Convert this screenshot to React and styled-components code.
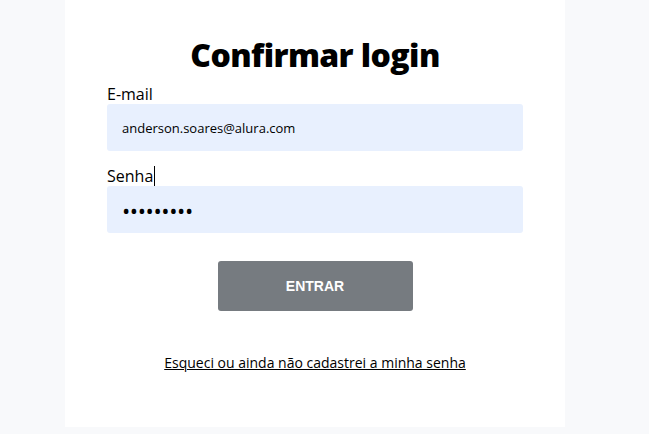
import React from "react";
import styled, { createGlobalStyle } from "styled-components";

const Global = createGlobalStyle`
  html, body { margin: 0; padding: 0; background: #f8f9fb; }
  body { font-family: "Open Sans", "Liberation Sans", sans-serif; color: #000; }
`;

const Page = styled.div`
  display: flex;
  min-height: 434px;
  padding-left: 65px;
  box-sizing: border-box;
`;

const Card = styled.main`
  width: 500px;
  height: 427px;
  background: #fff;
  box-sizing: border-box;
  padding: 33px 42px 0;
  display: flex;
  flex-direction: column;
`;

const Title = styled.h1`
  margin: 0 0 7px;
  font-size: 32px;
  font-weight: 800;
  text-align: center;
  line-height: 44px;
  letter-spacing: -0.6px;
`;

const Form = styled.form`
  display: flex;
  flex-direction: column;
`;

const Label = styled.label`
  font-size: 16px;
  line-height: 20px;
  display: flex;
  align-items: center;
  margin-top: ${(p) => p.$gap || 0}px;
`;

const Caret = styled.span`
  display: inline-block;
  width: 1px;
  height: 20px;
  background: #000;
  margin-left: 1px;
`;

const Input = styled.div`
  height: 47px;
  background: #e8f0fe;
  border-radius: 3px;
  padding: 0 15px;
  display: flex;
  align-items: center;
  font-size: 13px;
  box-sizing: border-box;
`;

const Dots = styled.span`
  font-size: 22px;
  letter-spacing: -0.4px;
  line-height: 1;
`;

const Button = styled.button`
  align-self: center;
  margin-top: 28px;
  width: 195px;
  height: 50px;
  border: none;
  border-radius: 3px;
  background: #767b80;
  color: #fff;
  font-family: "Liberation Sans", Arial, sans-serif;
  font-weight: 700;
  font-size: 14px;
  cursor: pointer;
`;

const Link = styled.a`
  align-self: center;
  margin-top: 42px;
  font-size: 14px;
  color: #000;
  text-decoration: underline;
`;

export default function App() {
  return (
    <>
      <Global />
      <Page>
        <Card>
          <Title>Confirmar login</Title>
          <Form onSubmit={(e) => e.preventDefault()}>
            <Label>E-mail</Label>
            <Input>anderson.soares@alura.com</Input>
            <Label $gap={15}>
              Senha
              <Caret />
            </Label>
            <Input>
              <Dots>•••••••••</Dots>
            </Input>
            <Button type="submit">ENTRAR</Button>
            <Link href="#">Esqueci ou ainda não cadastrei a minha senha</Link>
          </Form>
        </Card>
      </Page>
    </>
  );
}
